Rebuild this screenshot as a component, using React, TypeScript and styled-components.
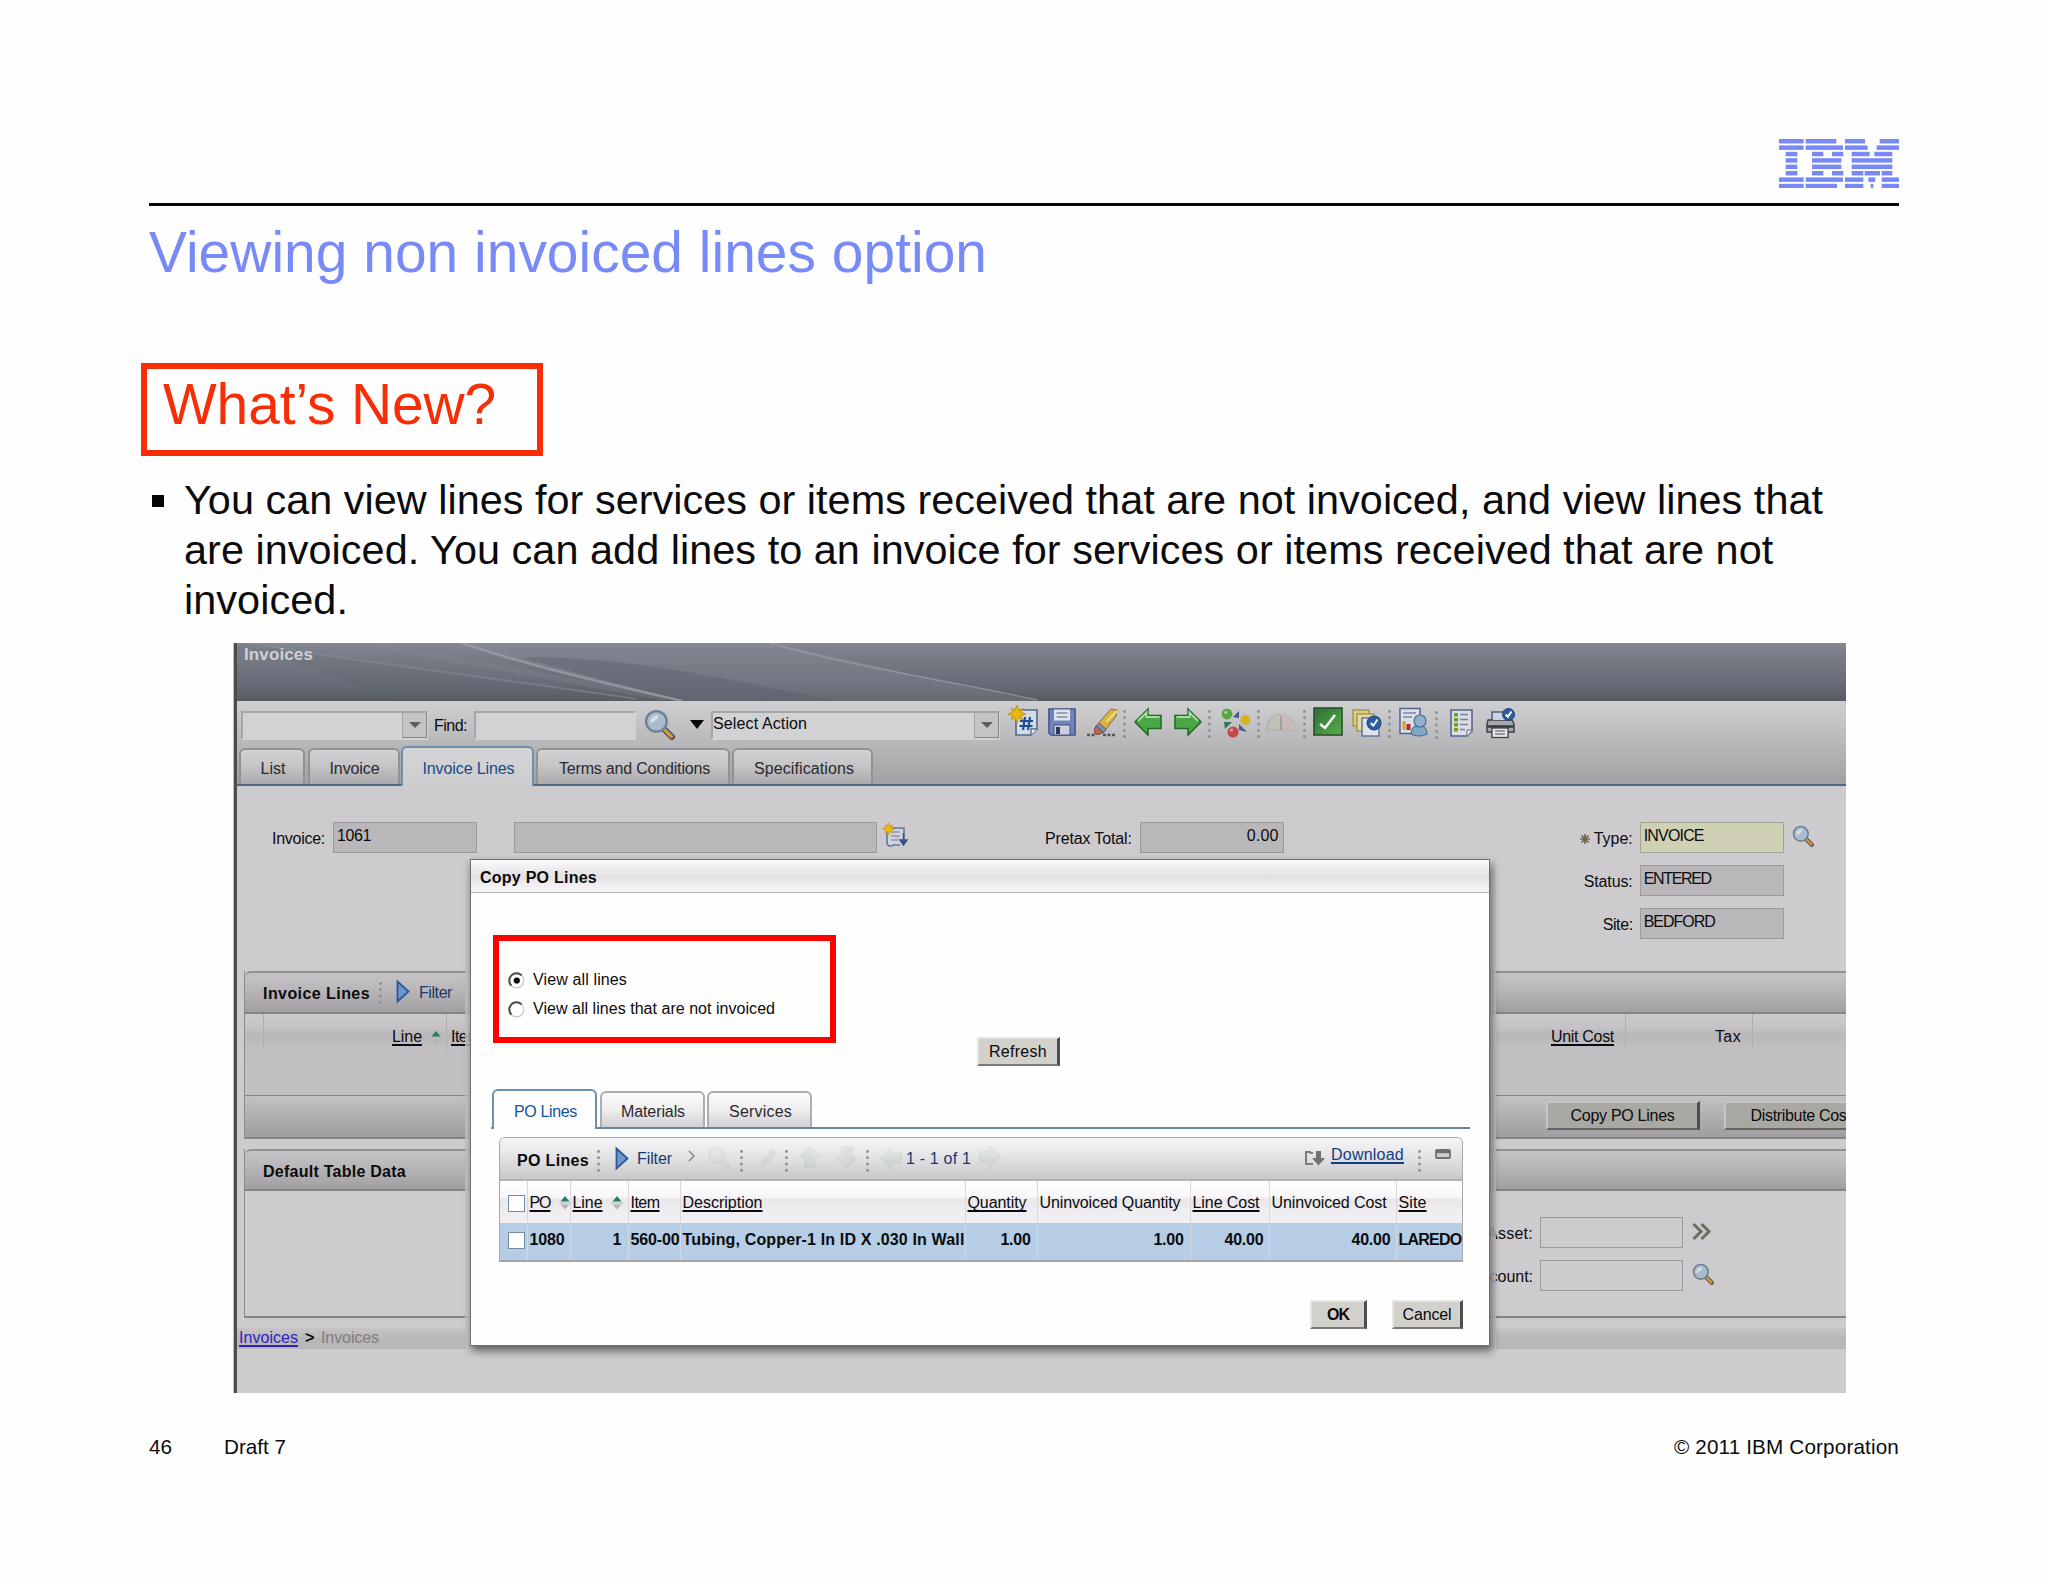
import React from "react";
import styled, { createGlobalStyle, css } from "styled-components";

const FONT = '"Liberation Sans", Arial, sans-serif';

const GlobalStyle = createGlobalStyle`
  * { box-sizing: border-box; }
  html, body { margin: 0; background: #fefefe; }
  body { font-family: ${FONT}; color: #000; overflow: hidden; }
`;

/* ---------- text that is spaced out to a given width ---------- */

const measureContext = document.createElement("canvas").getContext("2d");

function spacingFor(text: string, size: number, bold: boolean, width: number) {
  if (!measureContext) return 0;
  measureContext.font = `${bold ? "bold " : ""}${size}px ${FONT}`;
  return (width - measureContext.measureText(text).width) / text.length;
}

const Label = styled.span<{
  $size: number;
  $bold?: boolean;
  $color?: string;
  $line?: number;
  $ml?: number;
  $mt?: number;
  $underline?: boolean;
}>`
  flex: none;
  display: block;
  white-space: pre;
  font-size: ${(p) => p.$size}px;
  font-weight: ${(p) => (p.$bold ? 700 : 400)};
  line-height: ${(p) => p.$line ?? 20}px;
  color: ${(p) => p.$color ?? "#0b0b0d"};
  margin-left: ${(p) => p.$ml ?? 0}px;
  margin-top: ${(p) => p.$mt ?? 0}px;
  ${(p) =>
    p.$underline &&
    css`
      text-decoration: underline;
      text-decoration-thickness: 1.5px;
      text-underline-offset: 2px;
      text-decoration-skip-ink: none;
    `}
`;

type TextProps = {
  children: string;
  w: number;
  size?: number;
  bold?: boolean;
  color?: string;
  line?: number;
  ml?: number;
  mt?: number;
  underline?: boolean;
};

function Text({ children, w, size = 16, bold = false, color, line, ml, mt, underline }: TextProps) {
  return (
    <Label
      $size={size}
      $bold={bold}
      $color={color}
      $line={line}
      $ml={ml}
      $mt={mt}
      $underline={underline}
      style={{ letterSpacing: `${spacingFor(children, size, bold, w)}px` }}
    >
      {children}
    </Label>
  );
}

/* ---------- slide ---------- */

const Slide = styled.main`
  width: 2048px;
  height: 1582px;
  padding: 139px 149px 0;
  overflow: hidden;
  background: #fefefe;
`;

const SlideHeader = styled.header`
  display: flex;
  justify-content: flex-end;
  height: 67px;
  border-bottom: 3px solid #050505;
`;

const SlideTitle = styled.h1`
  margin: 14px 0 0;
  font-weight: 400;
`;

const WhatsNew = styled.div`
  width: 402px;
  height: 93px;
  margin: 79px 0 0 -8px;
  padding: 3px 0 0 16px;
  border: 6px solid #f72d05;
`;

const BulletRow = styled.div`
  display: flex;
  height: 150px;
  margin-top: 19px;
`;

const Bullet = styled.i`
  width: 12px;
  height: 12px;
  margin: 20px 20px 0 3px;
  background: #050505;
`;

const SlideFooter = styled.footer`
  display: flex;
  margin-top: 42px;
`;

const Push = styled.div`
  flex: 1;
`;

/* ---------- application window ---------- */

const Shot = styled.section`
  position: relative;
  width: 1613px;
  height: 750px;
  margin: 18px 0 0 84px;
  border-left: 1px solid #c9bda8;
  overflow: hidden;
  background: #cdcbcd;
`;

const Frame = styled.div`
  height: 750px;
  border-left: 3px solid #4c4b4d;
`;

const Banner = styled.div`
  position: relative;
  height: 58px;
  padding: 2px 0 0 7px;
  background: linear-gradient(#868a93 0, #7b808a 12%, #676b77 70%, #565c62 100%);
`;

const BannerArt = styled.svg`
  position: absolute;
  left: 0;
  top: 0;
`;

const BannerTitle = styled.div`
  position: relative;
`;

const ToolArea = styled.div`
  height: 85px;
  background: linear-gradient(#cfced0 0, #bdbcbe 40%, #a4a2a4 96%);
  border-bottom: 2px solid #52677f;
`;

const Toolbar = styled.div`
  display: flex;
  align-items: flex-start;
  height: 45px;
`;

const TextInput = styled.div<{ $w: number; $ml: number }>`
  flex: none;
  display: flex;
  width: ${(p) => p.$w}px;
  height: 29px;
  margin: 10px 0 0 ${(p) => p.$ml}px;
  border: 2px solid;
  border-color: #a6a5a8 #d1d2d4 #d1d2d4 #a6a5a8;
  background: #d1d2d4;
`;

const DropButton = styled.div`
  flex: none;
  display: grid;
  place-items: center;
  width: 25px;
  height: 26px;
  margin: -1px -1px 0 auto;
  border: 1px solid #929194;
  border-color: #a5a4a6 #858487 #858487 #a5a4a6;
  background: #c4c3c5;
`;

const Caret = styled.i<{ $big?: boolean }>`
  border: solid transparent;
  border-width: ${(p) => (p.$big ? "9px 7px 0" : "6px 6px 0")};
  border-top-color: ${(p) => (p.$big ? "#060606" : "#5e5d60")};
`;

const CaretSlot = styled.div`
  margin: 19px 0 0 15px;
  height: 10px;
  display: flex;
`;

const ToolIcon = styled.svg<{ $ml?: number; $mt?: number }>`
  flex: none;
  display: block;
  overflow: visible;
  margin-left: ${(p) => p.$ml ?? 0}px;
  margin-top: ${(p) => p.$mt ?? 0}px;
`;

const Dots = styled.i<{ $ml: number; $mt: number; $h?: number }>`
  flex: none;
  width: 3px;
  height: ${(p) => p.$h ?? 28}px;
  margin: ${(p) => p.$mt}px 0 0 ${(p) => p.$ml}px;
  background: radial-gradient(circle at 1.5px 1.5px, #8f8e91 0 1px, transparent 1.8px) 0 0 / 3px 6.3px repeat-y;
`;

const TabRow = styled.div<{ $pl: number }>`
  display: flex;
  align-items: flex-end;
  height: 38px;
  padding-left: ${(p) => p.$pl}px;
`;

const Tab = styled.div<{ $w: number; $active?: boolean; $light?: boolean; $gap?: number; $shift?: number }>`
  flex: none;
  display: flex;
  justify-content: center;
  width: ${(p) => p.$w}px;
  height: ${(p) => (p.$active ? 40 : 36)}px;
  margin: 0 ${(p) => p.$gap ?? 2.5}px ${(p) => (p.$active ? -2 : 0)}px 0;
  padding-top: ${(p) => (p.$active ? 11 : 9)}px;
  padding-left: ${(p) => p.$shift ?? 2}px;
  border: 2px solid ${(p) => (p.$active ? "#6b8fac" : p.$light ? "#aeabb2" : "#929194")};
  border-bottom: 0;
  border-radius: 6px 6px 0 0;
  background: ${(p) =>
    p.$light
      ? p.$active
        ? "#fefefe"
        : "linear-gradient(#fdfcfd 0, #f1eff1 45%, #d3d1d5 100%)"
      : p.$active
      ? "linear-gradient(#d4d5d8, #cecdcf)"
      : "linear-gradient(#d2d1d3 0, #c5c4c6 45%, #a9a8aa 100%)"};
`;

const Form = styled.div`
  display: flex;
  height: 185px;
  padding: 36px 0 0 35px;
`;

const FieldRow = styled.div`
  display: flex;
  height: 31px;
  margin-bottom: 12px;
`;

const FieldColumn = styled.div`
  flex: none;
  width: 400px;
  margin-left: 223px;
`;

const FieldLabel = styled.div<{ $w: number }>`
  display: flex;
  justify-content: flex-end;
  width: ${(p) => p.$w}px;
  padding-top: 7px;
`;

const Field = styled.div<{ $w: number; $ml: number; $tone?: "required" | "plain"; $right?: boolean }>`
  flex: none;
  display: flex;
  justify-content: ${(p) => (p.$right ? "flex-end" : "flex-start")};
  width: ${(p) => p.$w}px;
  height: 31px;
  margin-left: ${(p) => p.$ml}px;
  padding: 3px 4px 0 3px;
  border: 1.5px solid ${(p) => (p.$tone === "required" ? "#a3a696" : "#9b999c")};
  background: ${(p) => (p.$tone === "required" ? "#d0d0b4" : p.$tone === "plain" ? "#cdcbcd" : "#b9b7ba")};
`;

const Panel = styled.div`
  margin: 0 0 10px 7px;
  border-left: 1.5px solid #8b898c;
`;

const PanelHead = styled.div<{ $h: number }>`
  display: flex;
  height: ${(p) => p.$h}px;
  padding-left: 18px;
  border-top: 2px solid #929093;
  border-bottom: 2px solid #858386;
  border-radius: 6px 0 0 0;
  background: linear-gradient(#c5c3c6 0, #b9b7ba 40%, #a19fa2 100%);
`;

const ColumnHeads = styled.div`
  display: grid;
  grid-template-columns: 19px 183px 1179px 127px 1fr;
  height: 81px;
  background: linear-gradient(#cccacc 0, #c4c2c5 14px, #b9b7ba 20px, #c1bfc2 34px, #c2c0c3 100%);
`;

const ColumnHead = styled.div<{ $pr?: number; $between?: boolean }>`
  display: flex;
  justify-content: ${(p) => (p.$between ? "space-between" : "flex-end")};
  height: 36px;
  padding: 13px ${(p) => p.$pr ?? 0}px 0 4px;
  border-right: 1.5px solid #b0aeb1;
  &:last-child { border-right: 0; }
`;

const PanelFoot = styled.div`
  display: flex;
  height: 44px;
  padding: 5px 0 0 1301px;
  border-top: 1.5px solid #868487;
  border-bottom: 2px solid #868487;
  background: linear-gradient(#c3c1c4, #9f9da0);
  overflow: hidden;
`;

const Button = styled.div<{ $w: number; $ml?: number; $mt?: number; $dim?: boolean }>`
  flex: none;
  display: flex;
  justify-content: center;
  width: ${(p) => p.$w}px;
  height: 29px;
  padding-top: 3px;
  margin-left: ${(p) => p.$ml ?? 0}px;
  margin-top: ${(p) => p.$mt ?? 0}px;
  border-style: solid;
  border-width: 2px 3px 2px 2px;
  border-color: ${(p) => (p.$dim ? "#c6c5c1 #4d4c4c #656462 #c6c5c1" : "#e6e5e2 #4d4d4d #7a7977 #e6e5e2")};
  background: ${(p) => (p.$dim ? "#a9a8a3" : "#d2d0cb")};
`;

const PanelBody = styled.div`
  height: 127px;
  padding: 26px 0 0 1160px;
  border-bottom: 2px solid #868487;
`;

const Crumbs = styled.div`
  display: flex;
  height: 21px;
  padding-left: 2px;
  background: linear-gradient(#c6c4c7 0, #b9b7ba 50%);
`;

/* ---------- dialog ---------- */

const Halo = styled.div`
  position: absolute;
  left: 231px;
  top: 217px;
  width: 1031px;
  height: 489px;
  background: rgba(200, 198, 201, 0.82);
`;

const Dialog = styled.div`
  position: absolute;
  left: 236px;
  top: 216px;
  width: 1020px;
  height: 487px;
  border: 1.5px solid #6f6e70;
  background: #fefefe;
  box-shadow: 2px 5px 8px rgba(30, 28, 32, 0.6);
`;

const DialogTitle = styled.div`
  height: 33px;
  padding: 8px 0 0 9px;
  border-bottom: 1.5px solid #b9b7ba;
  background: linear-gradient(#fdfcfd 0, #efedef 25%, #e2e0e3 55%, #efedf0 72%, #f6f4f6 100%);
`;

const ChoiceRow = styled.div`
  display: flex;
  height: 130px;
  margin: 42px 0 0 22px;
`;

const Highlight = styled.div`
  display: flex;
  flex-direction: column;
  gap: 9px;
  width: 343px;
  height: 108px;
  padding: 29px 0 0 9px;
  border: 6px solid #fe0000;
`;

const Choice = styled.div`
  display: flex;
  align-items: center;
  height: 20px;
`;

const DialogTabs = styled.div`
  width: 979px;
  margin: 24px 0 0 20px;
  border-bottom: 2px solid #6587a4;
`;

const Grid = styled.div`
  width: 964px;
  margin: 8px 0 0 28px;
  border: 1.5px solid #a9a7ab;
  border-bottom: 2px solid #a2a4a9;
  border-radius: 6px 6px 0 0;
  overflow: hidden;
`;

const GridTools = styled.div`
  display: flex;
  height: 43px;
  padding-right: 11px;
  border-bottom: 2px solid #b4b3b5;
  background: linear-gradient(#f6f5f7 0, #e6e5e7 40%, #c9c8cb 100%);
`;

const GridLine = styled.div<{ $selected?: boolean }>`
  display: grid;
  grid-template-columns: 27.5px 43px 58px 52px 285px 72px 153px 79px 127px 1fr;
  height: ${(p) => (p.$selected ? 37 : 42)}px;
  background: ${(p) =>
    p.$selected ? "#b5cee5" : "linear-gradient(#fefefe 0, #f8f6f8 38%, #e9e7ea 44%, #f0eef1 75%, #f1eff1 100%)"};
`;

const Cell = styled.div<{ $right?: number; $pt: number; $pl?: number }>`
  display: flex;
  justify-content: ${(p) => (p.$right ? "flex-end" : "flex-start")};
  padding: ${(p) => p.$pt}px ${(p) => p.$right ?? 0}px 0 ${(p) => p.$pl ?? 2}px;
  border-right: 1.5px solid #d8d7db;
  &:last-child { border-right: 0; }
`;

const CheckBox = styled.i`
  flex: none;
  width: 17px;
  height: 17px;
  border: 1.5px solid #6f8ba5;
  background: #fff;
`;

const DialogButtons = styled.div`
  display: flex;
  margin: 38px 0 0 839px;
`;

/* ---------- drawings ---------- */

const LOGO_BARS: [number, number][][] = [
  [[0, 74], [80, 172], [198, 258], [302, 360]],
  [[0, 74], [80, 192], [198, 266], [293, 360]],
  [[20, 55], [99, 133], [159, 193], [218, 272], [286, 340]],
  [[20, 55], [99, 187], [218, 340]],
  [[20, 55], [99, 187], [218, 340]],
  [[20, 55], [99, 133], [159, 193], [218, 253], [257, 303], [308, 340]],
  [[0, 74], [80, 192], [198, 253], [268, 289], [308, 360]],
  [[0, 74], [80, 174], [198, 253], [275, 283], [308, 360]],
];

function Logo() {
  return (
    <svg width="120" height="49" viewBox="0 0 360 147" role="img" aria-label="IBM">
      {LOGO_BARS.map((row, i) =>
        row.map(([a, b]) => <rect key={`${i}-${a}`} x={a} y={i * 19.2} width={b - a} height="13.4" fill="#7889f5" />)
      )}
    </svg>
  );
}

function Waves() {
  return (
    <BannerArt width="1609" height="58" viewBox="0 0 1609 58">
      <path d="M225 0 C290 22 350 36 445 58 L800 58 C700 40 620 16 533 0Z" fill="#8b8f98" opacity=".3" />
      <path d="M300 14 C400 16 480 34 600 58 L445 58 C390 42 340 30 285 15Z" fill="#565a66" opacity=".35" />
      <path d="M30 3 C160 20 240 34 400 57 L150 57 C90 30 60 15 0 8 L0 0Z" fill="#5d636e" opacity=".15" />
      <path d="M30 3 C160 24 250 34 400 56" stroke="#8b9099" strokeWidth="2" fill="none" opacity=".5" />
      <path d="M130 0 C240 22 300 30 430 56" stroke="#868a94" strokeWidth="6" fill="none" opacity=".25" />
      <path d="M225 0 C290 22 350 36 445 58" stroke="#9a9ea6" strokeWidth="2.5" fill="none" opacity=".8" />
      <path d="M533 0 C610 22 690 34 800 57" stroke="#9a9ea6" strokeWidth="1.5" fill="none" opacity=".75" />
    </BannerArt>
  );
}

function Magnifier({ size, ml, mt, faint }: { size: number; ml: number; mt: number; faint?: boolean }) {
  return (
    <ToolIcon width={size} height={size} viewBox="0 0 30 30" $ml={ml} $mt={mt} opacity={faint ? 0.08 : 1}>
      <path d="M18 18 L27 27" stroke="#55504a" strokeWidth="6" strokeLinecap="round" />
      <path d="M19.5 19.5 L26.5 26.5" stroke="#c99a3f" strokeWidth="3.4" strokeLinecap="round" />
      <circle cx="12" cy="12" r="10" fill="#a9bccd" stroke="#6d8094" strokeWidth="2.2" />
      <path d="M6 11 A7 7 0 0 1 14 6 Q14 11 6 14Z" fill="#d3dde6" />
    </ToolIcon>
  );
}

function Star({ x, y }: { x: number; y: number }) {
  return (
    <path
      transform={`translate(${x} ${y})`}
      d="M0 -9 L2 -3.5 L6 -5.5 L4 -1.8 L9 0 L4 2 L5.5 6 L1.8 4 L0 9 L-2 4 L-5.5 5.5 L-4 2 L-9 0 L-4 -2 L-5.5 -5.5 L-2 -4Z"
      fill="#e8b80c"
      stroke="#b98d18"
      strokeWidth=".8"
    />
  );
}

function NewIcon() {
  return (
    <ToolIcon width="30" height="30" $ml={9} $mt={6}>
      <path d="M7 3 H28 V22 L22 28 H7Z" fill="#d3dbe6" stroke="#53698c" strokeWidth="1.6" />
      <path d="M28 22 H22 V28" fill="#eef2f6" stroke="#53698c" strokeWidth="1.3" />
      <path d="M16 10 L14 23 M21 10 L19 23 M11 14 H24 M10.5 19 H23.5" stroke="#1c4f93" strokeWidth="2.2" />
      <Star x={8} y={7} />
    </ToolIcon>
  );
}

function SaveIcon() {
  return (
    <ToolIcon width="28" height="28" $ml={9} $mt={7}>
      <path d="M1 1 H27 V27 H3 L1 25Z" fill="#7385b8" stroke="#43538a" strokeWidth="1.6" />
      <rect x="6" y="1.5" width="16" height="11" fill="#dfe3ea" />
      <path d="M8.5 5 H19.5 M8.5 9 H19.5" stroke="#7f8bab" strokeWidth="1.4" />
      <rect x="6" y="17" width="16" height="10" fill="#cdd0d8" stroke="#43538a" />
      <rect x="8" y="19" width="4" height="7" fill="#2c3760" />
    </ToolIcon>
  );
}

function EraserIcon() {
  return (
    <ToolIcon width="32" height="30" $ml={10} $mt={6}>
      <path d="M1 28 H10 M17 28 H30" stroke="#55555e" strokeWidth="2.4" strokeDasharray="3 1.5" />
      <path d="M10 19 L25 2 L31 3 L30 9 L17 26 Q8 29 10 19Z" fill="#dcb13c" stroke="#7b6f53" strokeWidth="1" />
      <path d="M20 15 L31 4" stroke="#f0d880" strokeWidth="2.4" />
      <path d="M13 16 L20 22 L17 26 L10 20Z" fill="#7592b4" stroke="#52637c" />
      <path d="M10 19 L17 25 Q13 29 9 27 Q7 23 10 19Z" fill="#b86a55" stroke="#7d4b40" />
    </ToolIcon>
  );
}

type ArrowProps = { right?: boolean; ml: number; size?: number; faint?: boolean; turn?: number; mt?: number };

function ArrowIcon({ right, ml, size = 28, faint, turn = 0, mt = 7 }: ArrowProps) {
  return (
    <ToolIcon width={size} height={size} viewBox="0 0 28 28" $ml={ml} $mt={mt} opacity={faint ? 0.08 : 1}>
      <g transform={`rotate(${right ? 180 : turn} 14 14)`}>
        <path d="M1 14 L14 1 V7.5 H27 V20.5 H14 V27Z" fill="#4aa646" stroke="#1f6724" strokeWidth="1.5" />
        <path
          d={right ? "M4 15 L12.5 23.5 V19 H25.5" : "M4 13 L12.5 4.5 V9 H25.5"}
          stroke="#a9dba0"
          strokeWidth="2"
          fill="none"
        />
      </g>
    </ToolIcon>
  );
}

function BallsIcon() {
  return (
    <ToolIcon width="30" height="30" $ml={10} $mt={7}>
      <path d="M12 9 L18 3 V10Z" fill="#3c5c8e" />
      <path d="M3 14 L11 14 L4 21Z" fill="#2f7465" />
      <path d="M18 16 L26 24 L18 22Z" fill="#3c5c8e" />
      <circle cx="6" cy="6" r="5.4" fill="#5aa544" />
      <circle cx="24.5" cy="12" r="5" fill="#d6b322" />
      <circle cx="12" cy="24" r="5.6" fill="#c8484b" />
      <circle cx="10.5" cy="22" r="1.6" fill="#e4a0a0" />
      <circle cx="4.8" cy="4.5" r="1.5" fill="#b4dba6" />
    </ToolIcon>
  );
}

function GaugeIcon() {
  return (
    <ToolIcon width="30" height="20" $ml={6} $mt={11} opacity=".5">
      <path d="M1 18 A14 16 0 0 1 29 18Z" fill="#c3c0ae" stroke="#9b9994" strokeWidth="1.2" />
      <path d="M15 2 A14 16 0 0 1 29 18 H15Z" fill="#d0b5ae" />
      <path d="M15 4 V18" stroke="#746f6c" strokeWidth="1.6" />
    </ToolIcon>
  );
}

function CheckIcon() {
  return (
    <ToolIcon width="30" height="29" $ml={7} $mt={6}>
      <defs>
        <linearGradient id="go" x1="0" y1="0" x2="1" y2="1">
          <stop offset="0" stopColor="#2d6c35" />
          <stop offset="1" stopColor="#58b04a" />
        </linearGradient>
      </defs>
      <rect x="1" y="1" width="28" height="27" fill="url(#go)" stroke="#28502d" strokeWidth="1.6" />
      <path d="M7 17 L12 21 L22 8" stroke="#f1f6ef" strokeWidth="2.6" fill="none" />
    </ToolIcon>
  );
}

function BlueTick({ x, y, r }: { x: number; y: number; r: number }) {
  return (
    <g transform={`translate(${x} ${y})`}>
      <circle r={r} fill="#2b5e9d" stroke="#1d3f70" />
      <path
        d={`M${-r * 0.45} 0 L${-r * 0.1} ${r * 0.4} L${r * 0.5} ${-r * 0.5}`}
        stroke="#fff"
        strokeWidth="1.9"
        fill="none"
      />
    </g>
  );
}

function FoldersIcon() {
  return (
    <ToolIcon width="31" height="29" $ml={9} $mt={7}>
      <rect x="1" y="2" width="16" height="16" fill="#d9cc8d" stroke="#a38f42" strokeWidth="1.3" />
      <rect x="5" y="6" width="17" height="17" fill="#e3d9a4" stroke="#a38f42" strokeWidth="1.3" />
      <rect x="10" y="10" width="17" height="18" fill="#dfe2ec" stroke="#5b6890" strokeWidth="1.3" />
      <BlueTick x={22} y={15} r={7} />
    </ToolIcon>
  );
}

function ReportIcon() {
  return (
    <ToolIcon width="31" height="31" $ml={7} $mt={6}>
      <rect x="2" y="1.5" width="20" height="25" fill="#dcdfe8" stroke="#55648d" strokeWidth="1.5" />
      <path d="M5 6 H18 M5 10 H14" stroke="#7a86a6" strokeWidth="1.6" />
      <path d="M6 23 V14" stroke="#d9a02c" strokeWidth="3" />
      <path d="M10.5 23 V17" stroke="#b22a2a" strokeWidth="4" />
      <path d="M13 27 Q13 19 21 18 Q29 19 29 27 Q21 31 13 27Z" fill="#82a5c4" stroke="#456d92" strokeWidth="1.2" />
      <circle cx="22" cy="14" r="6" fill="#8fb0cc" stroke="#456d92" strokeWidth="1.2" />
    </ToolIcon>
  );
}

function ListIcon() {
  return (
    <ToolIcon width="24" height="29" $ml={12} $mt={8}>
      <path d="M1 1 H22 V22 L17 27 H1Z" fill="#dadde5" stroke="#57648a" strokeWidth="1.6" />
      <path d="M22 21 H17 V27" fill="#f3f4f7" stroke="#57648a" />
      {[5, 10, 15, 20].map((y) => (
        <g key={y}>
          <rect x="4" y={y - 1} width="4" height="3.5" fill="#69a31f" />
          <path d={`M10 ${y + 0.5} H${y > 18 ? 15 : 18}`} stroke="#7b7f98" strokeWidth="1.5" />
        </g>
      ))}
    </ToolIcon>
  );
}

function PrinterIcon() {
  return (
    <ToolIcon width="30" height="31" $ml={12} $mt={7}>
      <rect x="6" y="4" width="15" height="12" fill="#d5dbe6" stroke="#53607c" strokeWidth="1.5" />
      <path d="M2 12 H26 L28 16 V24 H1 V16Z" fill="#a6a9ac" stroke="#3f4347" strokeWidth="1.5" />
      <path d="M1.5 18.5 H27.5" stroke="#35383c" strokeWidth="2.5" />
      <rect x="6" y="20" width="16" height="9.5" fill="#e7e7e9" stroke="#3f4347" strokeWidth="1.3" />
      <path d="M9 23 H19 M9 26 H19" stroke="#7d7f84" strokeWidth="1.3" />
      <rect x="7" y="5" width="13" height="7" fill="#c8d4e4" />
      <BlueTick x={22.5} y={6.5} r={6} />
    </ToolIcon>
  );
}

function NoteIcon() {
  return (
    <ToolIcon width="26" height="25" $ml={6} $mt={2}>
      <path d="M4 4 H21 V17 M4 4 V20 Q7 24 10 21 H17" fill="#cfd3dc" stroke="#6678a0" strokeWidth="1.6" />
      <path d="M9 8 H17 M8 12 H17 M8 16 H15" stroke="#8d99b8" strokeWidth="1.4" />
      <path d="M20.5 9 V20 M17 16 H24 L20.5 21Z" stroke="#394f8c" strokeWidth="1.5" fill="#394f8c" />
      <g transform="scale(.7)">
        <Star x={8} y={7} />
      </g>
    </ToolIcon>
  );
}

function Asterisk() {
  return (
    <ToolIcon width="12" height="12" viewBox="-6 -6 12 12" $mt={4}>
      <path
        d="M0 -5 V5 M-5 0 H5 M-3.5 -3.5 L3.5 3.5 M-3.5 3.5 L3.5 -3.5"
        stroke="#6d6747"
        strokeWidth="1.7"
      />
    </ToolIcon>
  );
}

function Play({ ml, mt }: { ml: number; mt: number }) {
  return (
    <ToolIcon width="14" height="23" $ml={ml} $mt={mt}>
      <path d="M1.5 1.5 L12.5 11.5 L1.5 21.5Z" fill="#6d98cf" stroke="#2b5797" strokeWidth="1.8" />
    </ToolIcon>
  );
}

function Sort({ ml, mt = 4 }: { ml: number; mt?: number }) {
  return (
    <ToolIcon width="12" height="14" $ml={ml} $mt={mt}>
      <path d="M6 0 L10.5 5.5 H1.5Z" fill="#1d8168" />
      <path d="M0 7 H12" stroke="#b9b7ba" strokeWidth="1" />
      <path d="M6 13.5 L10.5 8.5 H1.5Z" fill="#b5b3b6" />
    </ToolIcon>
  );
}

function RadioMark({ on }: { on?: boolean }) {
  return (
    <svg width="17" height="17" viewBox="0 0 17 17">
      <circle cx="8.5" cy="8.5" r="7.3" fill="#fff" stroke="#cfcdca" strokeWidth="1.4" />
      <path d="M3.4 13.6 A7.2 7.2 0 0 1 13.6 3.4" stroke="#4a4a4a" strokeWidth="2" fill="none" />
      {on && <circle cx="8.8" cy="8.5" r="3.1" fill="#050505" />}
    </svg>
  );
}

function PencilGhost() {
  return (
    <ToolIcon width="20" height="22" $ml={15} $mt={10} opacity=".1">
      <path d="M2 20 L6 10 L15 1 L19 5 L11 15Z" fill="#8a8a70" />
    </ToolIcon>
  );
}

function DownloadIcon() {
  return (
    <ToolIcon width="20" height="15" $mt={13}>
      <path d="M8 2 H6 L5 1 H1 V13 H8" stroke="#7c7b7d" strokeWidth="2" fill="none" />
      <path d="M11 0 H16 V7 H20 L13.5 14.5 L7 7 H11Z" fill="#727173" />
    </ToolIcon>
  );
}

/* ---------- data ---------- */

type Column = {
  head: string;
  hw: number;
  value: string;
  vw: number;
  link?: boolean;
  sort?: number;
  right?: number;
};

const COLUMNS: Column[] = [
  { head: "PO", hw: 21, value: "1080", vw: 35, link: true, sort: 8 },
  { head: "Line", hw: 30, value: "1", vw: 8, link: true, sort: 8, right: 7 },
  { head: "Item", hw: 29, value: "560-00", vw: 49, link: true },
  { head: "Description", hw: 80, value: "Tubing, Copper-1 In ID X .030 In Wall", vw: 282, link: true },
  { head: "Quantity", hw: 59, value: "1.00", vw: 30, link: true, right: 6 },
  { head: "Uninvoiced Quantity", hw: 141, value: "1.00", vw: 30, right: 6 },
  { head: "Line Cost", hw: 67, value: "40.00", vw: 39, link: true, right: 5 },
  { head: "Uninvoiced Cost", hw: 115, value: "40.00", vw: 39, right: 5 },
  { head: "Site", hw: 28, value: "LAREDO", vw: 63, link: true },
];

/* ---------- parts ---------- */

function AppWindow() {
  return (
    <Frame>
      <Banner>
        <Waves />
        <BannerTitle>
          <Text w={69} size={17} bold color="#cfd0d4">Invoices</Text>
        </BannerTitle>
      </Banner>
      <ToolArea>
        <Toolbar>
          <TextInput $w={187} $ml={4}><DropButton><Caret /></DropButton></TextInput>
          <Text w={33} ml={6} mt={15}>Find:</Text>
          <TextInput $w={162} $ml={7} />
          <Magnifier size={31} ml={8} mt={8} />
          <CaretSlot><Caret $big /></CaretSlot>
          <TextInput $w={289} $ml={7}>
            <Text w={95} ml={0} mt={1}>Select Action</Text>
            <DropButton><Caret /></DropButton>
          </TextInput>
          <NewIcon />
          <SaveIcon />
          <EraserIcon />
          <Dots $ml={5} $mt={9} />
          <ArrowIcon ml={8} />
          <ArrowIcon ml={12} right />
          <Dots $ml={6} $mt={9} />
          <BallsIcon />
          <Dots $ml={6} $mt={9} />
          <GaugeIcon />
          <Dots $ml={7} $mt={9} />
          <CheckIcon />
          <FoldersIcon />
          <Dots $ml={5} $mt={9} />
          <ReportIcon />
          <Dots $ml={6} $mt={10} />
          <ListIcon />
          <PrinterIcon />
        </Toolbar>
        <TabRow $pl={2}>
          <Tab $w={66}><Text w={25} color="#2a2a2e">List</Text></Tab>
          <Tab $w={92} $gap={1.5}><Text w={50} color="#2a2a2e">Invoice</Text></Tab>
          <Tab $w={133} $active $gap={1.5}><Text w={92} color="#144a8c">Invoice Lines</Text></Tab>
          <Tab $w={194} $shift={4}><Text w={151} color="#2a2a2e">Terms and Conditions</Text></Tab>
          <Tab $w={141} $shift={3}><Text w={100} color="#2a2a2e">Specifications</Text></Tab>
        </TabRow>
      </ToolArea>
      <Form>
        <Text w={53} mt={7}>Invoice:</Text>
        <Field $w={144} $ml={8}><Text w={34}>1061</Text></Field>
        <Field $w={363} $ml={37} />
        <NoteIcon />
        <Text w={87} ml={136} mt={7}>Pretax Total:</Text>
        <Field $w={144} $ml={8} $right><Text w={32}>0.00</Text></Field>
        <FieldColumn>
          <FieldRow>
            <FieldLabel $w={126}><Asterisk /><Text w={39} ml={3}>Type:</Text></FieldLabel>
            <Field $w={144} $ml={7} $tone="required"><Text w={60}>INVOICE</Text></Field>
            <Magnifier size={22} ml={8} mt={3} />
          </FieldRow>
          <FieldRow>
            <FieldLabel $w={126}><Text w={49}>Status:</Text></FieldLabel>
            <Field $w={144} $ml={7}><Text w={67}>ENTERED</Text></Field>
          </FieldRow>
          <FieldRow>
            <FieldLabel $w={126}><Text w={30}>Site:</Text></FieldLabel>
            <Field $w={144} $ml={7}><Text w={71}>BEDFORD</Text></Field>
          </FieldRow>
        </FieldColumn>
      </Form>

      <Panel>
        <PanelHead $h={43}>
          <Text w={107} bold mt={11}>Invoice Lines</Text>
          <Dots $ml={9} $mt={9} $h={23} />
          <Play ml={14} mt={7} />
          <Text w={33} color="#1b3a68" ml={9} mt={10}>Filter</Text>
        </PanelHead>
        <ColumnHeads>
          <ColumnHead />
          <ColumnHead $pr={4}>
            <Text w={30} underline>Line</Text>
            <Sort ml={8} />
          </ColumnHead>
          <ColumnHead $between $pr={11}>
            <Text w={29} underline>Item</Text>
            <Text w={63} underline>Unit Cost</Text>
          </ColumnHead>
          <ColumnHead $pr={11}><Text w={26}>Tax</Text></ColumnHead>
          <ColumnHead />
        </ColumnHeads>
        <PanelFoot>
          <Button $w={154} $dim><Text w={104}>Copy PO Lines</Text></Button>
          <Button $w={150} $ml={24} $dim><Text w={96}>Distribute Cos</Text></Button>
        </PanelFoot>
      </Panel>

      <Panel>
        <PanelHead $h={42}>
          <Text w={143} bold mt={11}>Default Table Data</Text>
        </PanelHead>
        <PanelBody>
          <FieldRow>
            <FieldLabel $w={128}><Text w={46}>Asset:</Text></FieldLabel>
            <Field $w={143} $ml={7} $tone="plain" />
            <ToolIcon width="19" height="17" $ml={9} $mt={6}>
              <path
                d="M1.5 1 L9 8.5 L1.5 16 M9.5 1 L17 8.5 L9.5 16"
                stroke="#6f6b5e"
                strokeWidth="3"
                fill="none"
              />
            </ToolIcon>
          </FieldRow>
          <FieldRow>
            <FieldLabel $w={128}><Text w={62}>Account:</Text></FieldLabel>
            <Field $w={143} $ml={7} $tone="plain" />
            <Magnifier size={22} ml={9} mt={3} />
          </FieldRow>
        </PanelBody>
      </Panel>

      <Crumbs>
        <Text w={59} color="#2c1fbf" underline>Invoices</Text>
        <Text w={9} bold ml={7}>&gt;</Text>
        <Text w={58} ml={7} color="#7f7d80">Invoices</Text>
      </Crumbs>
    </Frame>
  );
}

function PoGrid() {
  return (
    <Grid>
      <GridTools>
        <Text w={72} bold ml={17} mt={13}>PO Lines</Text>
        <Dots $ml={8} $mt={12} $h={22} />
        <Play ml={15} mt={9} />
        <Text w={35} ml={8} mt={11} color="#153a72">Filter</Text>
        <ToolIcon width="8" height="12" $ml={16} $mt={12}>
          <path d="M1 1 L6 6 L1 11" stroke="#8c8b8e" strokeWidth="1.7" fill="none" />
        </ToolIcon>
        <Magnifier size={23} ml={11} mt={8} faint />
        <Dots $ml={10} $mt={12} $h={22} />
        <PencilGhost />
        <Dots $ml={7} $mt={12} $h={22} />
        <ArrowIcon ml={11} mt={8} size={22} turn={90} faint />
        <ArrowIcon ml={15} mt={8} size={22} turn={-90} faint />
        <Dots $ml={8} $mt={12} $h={22} />
        <ArrowIcon ml={11} mt={9} size={22} faint />
        <Text w={65} ml={4} mt={11} color="#153a72">1 - 1 of 1</Text>
        <ArrowIcon ml={8} mt={8} size={22} right faint />
        <Push />
        <DownloadIcon />
        <Text w={73} ml={6} mt={7} color="#123f82" underline>Download</Text>
        <Dots $ml={14} $mt={12} $h={22} />
        <ToolIcon width="16" height="11" $ml={14} $mt={11}>
          <rect x="1" y="1" width="14" height="8" rx="1" fill="#d0cfd1" stroke="#6f6e71" strokeWidth="1.8" />
          <path d="M1 3 H15" stroke="#6f6e71" strokeWidth="2.6" />
        </ToolIcon>
      </GridTools>
      <GridLine>
        <Cell $pt={14} $pl={8}><CheckBox /></Cell>
        {COLUMNS.map((c) => (
          <Cell key={c.head} $pt={12}>
            <Text w={c.hw} underline={c.link}>{c.head}</Text>
            {c.sort !== undefined && <Sort ml={c.sort} mt={3} />}
          </Cell>
        ))}
      </GridLine>
      <GridLine $selected>
        <Cell $pt={9} $pl={8}><CheckBox /></Cell>
        {COLUMNS.map((c) => (
          <Cell key={c.head} $pt={7} $right={c.right}>
            <Text w={c.vw} bold>{c.value}</Text>
          </Cell>
        ))}
      </GridLine>
    </Grid>
  );
}

function CopyDialog() {
  return (
    <Dialog>
      <DialogTitle><Text w={117} bold>Copy PO Lines</Text></DialogTitle>
      <ChoiceRow>
        <Highlight>
          <Choice><RadioMark on /><Text w={94} ml={8}>View all lines</Text></Choice>
          <Choice><RadioMark /><Text w={242} ml={8}>View all lines that are not invoiced</Text></Choice>
        </Highlight>
        <Button $w={83} $ml={141} $mt={102}><Text w={58}>Refresh</Text></Button>
      </ChoiceRow>
      <DialogTabs>
        <TabRow $pl={1}>
          <Tab $w={105} $active $light><Text w={63} color="#14529c">PO Lines</Text></Tab>
          <Tab $w={105} $light><Text w={64} color="#2a2a2e">Materials</Text></Tab>
          <Tab $w={105} $light><Text w={63} color="#2a2a2e">Services</Text></Tab>
        </TabRow>
      </DialogTabs>
      <PoGrid />
      <DialogButtons>
        <Button $w={57}><Text w={22} bold>OK</Text></Button>
        <Button $w={71} $ml={25}><Text w={49}>Cancel</Text></Button>
      </DialogButtons>
    </Dialog>
  );
}

export default function App() {
  return (
    <>
      <GlobalStyle />
      <Slide>
        <SlideHeader><Logo /></SlideHeader>
        <SlideTitle>
          <Text w={838} size={56.9} line={64} color="#7889f8">Viewing non invoiced lines option</Text>
        </SlideTitle>
        <WhatsNew>
          <Text w={333} size={56.9} line={64} color="#f72d05">What’s New?</Text>
        </WhatsNew>
        <BulletRow>
          <Bullet />
          <div>
            <Text w={1639} size={41.4} line={50}>You can view lines for services or items received that are not invoiced, and view lines that</Text>
            <Text w={1590} size={41.4} line={50}>are invoiced. You can add lines to an invoice for services or items received that are not</Text>
            <Text w={164} size={41.4} line={50}>invoiced.</Text>
          </div>
        </BulletRow>
        <Shot>
          <AppWindow />
          <Halo />
          <CopyDialog />
        </Shot>
        <SlideFooter>
          <Text w={23} size={20.7} line={24}>46</Text>
          <Text w={62} size={20.7} line={24} ml={52}>Draft 7</Text>
          <Push />
          <Text w={225} size={20.7} line={24}>© 2011 IBM Corporation</Text>
        </SlideFooter>
      </Slide>
    </>
  );
}
